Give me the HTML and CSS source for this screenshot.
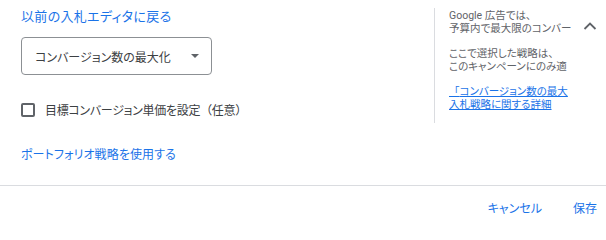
FILE: index.html
```html
<!DOCTYPE html>
<html lang="ja">
<head>
<meta charset="utf-8">
<link rel="stylesheet" href="styles.css">
</head>
<body>
<div class="page">
  <div class="main">
    <div class="left">
      <a class="link back">以前の入札エディタに戻る</a>
      <div class="select">
        <span class="select-text">コンバージョン数の最大化</span>
        <span class="arrow"></span>
      </div>
      <label class="check-row">
        <span class="checkbox"></span>
        <span class="check-label">目標コンバージョン単価を設定<span class="fw">（任意）</span></span>
      </label>
      <a class="link portfolio">ポートフォリオ戦略を使用する</a>
    </div>
    <div class="side">
      <div class="side-text">
        <p>Google 広告では、<br>予算内で最大限のコンバー</p>
        <p>ここで選択した戦略は、<br>このキャンペーンにのみ適</p>
        <p><a class="side-link"><span class="fw">「</span>コンバージョン数の最大<br>入札戦略に関する詳細</a></p>
      </div>
      <div class="chevron">
        <svg width="14" height="9" viewBox="0 0 14 9"><path d="M1.5 8 L7 2.5 L12.5 8" fill="none" stroke="#5f6368" stroke-width="1.8"/></svg>
      </div>
    </div>
  </div>
  <div class="footer">
    <a class="btn">キャンセル</a>
    <a class="btn">保存</a>
  </div>
</div>
</body>
</html>
```

FILE: styles.css
```css
html, body {
  margin: 0;
  padding: 0;
  background: #fff;
}
body {
  font-family: Roboto, "Noto Sans CJK JP", sans-serif;
  color: #3c4043;
  font-feature-settings: "palt";
}
.page {
  width: 606px;
}
.fw {
  font-feature-settings: normal;
}
.main {
  display: flex;
  height: 186px;
  border-bottom: 1px solid #dadce0;
  box-sizing: border-box;
}
.left {
  width: 413px;
  padding-left: 21px;
  display: flex;
  flex-direction: column;
  align-items: flex-start;
}
.link {
  color: #1a73e8;
  text-decoration: none;
}
.back {
  font-size: 13px;
  line-height: 16px;
  margin-top: 9px;
  letter-spacing: 0.3px;
}
.select {
  margin-top: 12px;
  width: 191px;
  height: 38px;
  box-sizing: border-box;
  border: 1px solid #8c9094;
  border-radius: 4px;
  display: flex;
  align-items: center;
  padding-left: 13px;
  padding-right: 12px;
}
.select-text {
  flex: 1;
  font-size: 12px;
}
.arrow {
  width: 0;
  height: 0;
  border-left: 4px solid transparent;
  border-right: 4px solid transparent;
  border-top: 4px solid #5f6368;
}
.check-row {
  margin-top: 26px;
  display: flex;
  align-items: center;
}
.checkbox {
  width: 14px;
  height: 14px;
  box-sizing: border-box;
  border: 2px solid #5f6368;
  border-radius: 2px;
}
.check-label {
  margin-left: 10px;
  font-size: 12px;
  letter-spacing: -0.3px;
}
.portfolio {
  margin-top: 27px;
  font-size: 12px;
  letter-spacing: 0.1px;
}
.side {
  display: flex;
  align-items: flex-start;
  margin-top: 8px;
  height: 115px;
  border-left: 1px solid #dadce0;
  box-sizing: border-box;
  padding-left: 14px;
}
.side-text {
  width: 122px;
  overflow: hidden;
  white-space: nowrap;
  font-size: 10.5px;
  line-height: 13px;
  color: #5f6368;
  padding-top: 1px;
}
.side-text p {
  margin: 0 0 12px 0;
}
.side-link {
  color: #1a73e8;
  text-decoration: underline;
}
.chevron {
  margin-left: 12px;
  margin-top: 7px;
}
.footer {
  height: 39px;
  box-sizing: border-box;
  padding-top: 4px;
  display: flex;
  justify-content: flex-end;
  align-items: center;
  padding-right: 9px;
  gap: 31px;
}
.btn {
  color: #1a73e8;
  font-size: 12px;
}
```
